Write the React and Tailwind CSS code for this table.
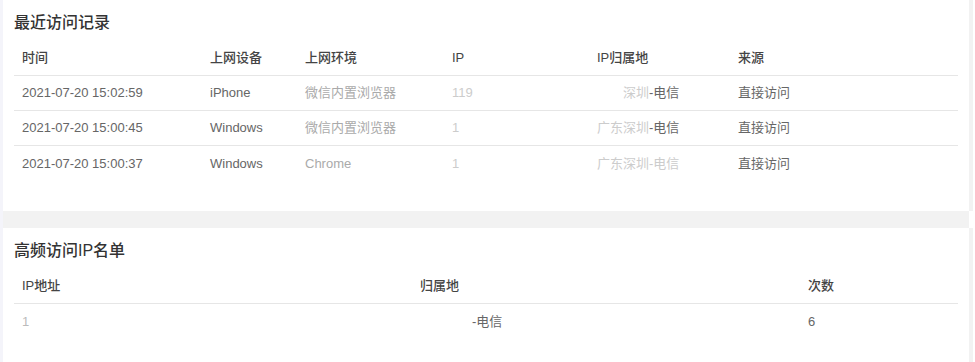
const font = { fontFamily: '"Liberation Sans", "Noto Sans CJK SC", sans-serif' };

const visits = [
  { time: '2021-07-20 15:02:59', device: 'iPhone', env: '微信内置浏览器', ip: '119', hide: '广东', dim: '深圳', loc: '-电信', src: '直接访问' },
  { time: '2021-07-20 15:00:45', device: 'Windows', env: '微信内置浏览器', ip: '1', hide: '', dim: '广东深圳', loc: '-电信', src: '直接访问' },
  { time: '2021-07-20 15:00:37', device: 'Windows', env: 'Chrome', ip: '1', hide: '', dim: '广东深圳-电信', loc: '', src: '直接访问' },
];

const cols = 'grid grid-cols-[188px_95px_147px_145px_141px_1fr]';
const cols2 = 'grid grid-cols-[398px_388px_1fr]';

export default function App() {
  return (
    <div className="flex w-[975px] h-[362px] bg-white overflow-hidden" style={font}>
      <div className="w-[3px] bg-[#f4f4fa]" />
      <div className="w-[966px] flex flex-col bg-[#f2f2f2]">
        {/* recent visits */}
        <div className="bg-white h-[211px] px-[11px] pt-[12px]">
          <h2 className="h-[22px] leading-[22px] text-[16px] font-medium text-[#333]">最近访问记录</h2>
          <div className={`${cols} mt-[7px] h-[35px] items-center border-b border-[#e6e6e6] text-[13px] font-medium text-[#444]`}>
            <div className="pl-2">时间</div>
            <div className="pl-2">上网设备</div>
            <div className="pl-2">上网环境</div>
            <div className="pl-2">IP</div>
            <div className="pl-2">IP归属地</div>
            <div className="pl-2">来源</div>
          </div>
          {visits.map((v, i) => (
            <div
              key={i}
              className={`${cols} h-[35px] items-center text-[13px] text-[#666] ${i < visits.length - 1 ? 'border-b border-[#e6e6e6]' : ''}`}
            >
              <div className="pl-2">{v.time}</div>
              <div className="pl-2">{v.device}</div>
              <div className="pl-2 text-[#aaa]">{v.env}</div>
              <div className="pl-2 text-[#ccc]">{v.ip}</div>
              <div className="pl-2">
                <span className="text-transparent">{v.hide}</span>
                <span className="text-[#ccc]">{v.dim}</span>
                {v.loc}
              </div>
              <div className="pl-2">{v.src}</div>
            </div>
          ))}
        </div>

        <div className="h-[17px]" />

        {/* frequent IPs */}
        <div className="bg-white flex-1 px-[11px] pt-[12px]">
          <h2 className="h-[22px] leading-[22px] text-[16px] font-medium text-[#333]">高频访问IP名单</h2>
          <div className={`${cols2} mt-[7px] h-[35px] items-center border-b border-[#e6e6e6] text-[13px] font-medium text-[#444]`}>
            <div className="pl-2">IP地址</div>
            <div className="pl-2">归属地</div>
            <div className="pl-2">次数</div>
          </div>
          <div className={`${cols2} h-[35px] items-center text-[13px] text-[#666]`}>
            <div className="pl-2 text-[#bbb]">1</div>
            <div className="pl-2">
              <span className="text-transparent">广东深圳</span>-电信
            </div>
            <div className="pl-2">6</div>
          </div>
        </div>
      </div>
      <div className="w-[4px] flex flex-col">
        <div className="h-[211px] bg-[#f2f2f2]" />
        <div className="h-[17px] bg-white" />
        <div className="flex-1 bg-[#f2f2f2]" />
      </div>
    </div>
  );
}
